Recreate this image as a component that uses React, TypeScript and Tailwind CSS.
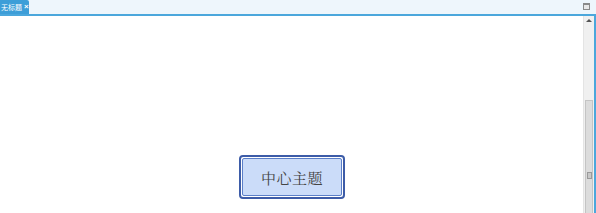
import React from "react";

export default function App() {
  return (
    <div className="w-[596px] h-[213px] flex flex-col bg-white overflow-hidden font-['Liberation_Sans','Noto_Sans_CJK_SC',sans-serif]">
      {/* tab bar */}
      <div className="h-[14px] flex items-end bg-[#eef6fc] pr-[6px]">
        <div className="h-[14px] w-[29px] bg-[#3d9ed8] flex items-center overflow-hidden rounded-tr-[2px]">
          <span className="ml-px text-[7px] leading-none text-white whitespace-nowrap">无标题</span>
          <span className="ml-[2px] text-[8px] leading-none font-bold text-white">×</span>
        </div>
        <div className="flex-1" />
        <div className="mb-[4px] w-[7px] h-[7px] border border-[#8a8a8a] border-t-[2px] bg-[#e8e8e8]" />
      </div>
      <div className="h-[2px] bg-[#4ba7dc]" />

      {/* body */}
      <div className="flex-1 flex min-h-0">
        <div className="flex-1 relative">
          <div className="absolute left-[239px] top-[139px] w-[106px] h-[44px] rounded-[4px] border-2 border-[#3d5ca8] bg-white p-[1px]">
            <div className="w-full h-full rounded-[2px] border border-[#5b7fc8] bg-[#cbdcf9] flex items-center justify-center">
              <span className="text-[15px] leading-none text-[#444] font-['Noto_Serif_CJK_SC','Noto_Sans_CJK_SC',serif] tracking-[0.5px]">中心主题</span>
            </div>
          </div>
        </div>
        {/* scrollbar */}
        <div className="w-[11px] flex flex-col bg-[#f0f0f0] border-l border-[#e4e4e4]">
          <div className="h-[9px] flex items-center justify-center">
            <div className="w-0 h-0 border-l-[3px] border-r-[3px] border-b-[3px] border-l-transparent border-r-transparent border-b-[#555]" />
          </div>
          <div className="h-[75px]" />
          <div className="flex-1 mx-[1px] bg-[#dcdcdc] border border-[#c4c4c4] border-b-0 flex flex-col items-center pt-[71px]">
            <div className="w-[5px] h-[7px] border border-[#9a9a9a] bg-[#c8c8c8]" />
          </div>
        </div>
        <div className="w-[2px] bg-[#4ba7dc]" />
      </div>
    </div>
  );
}
